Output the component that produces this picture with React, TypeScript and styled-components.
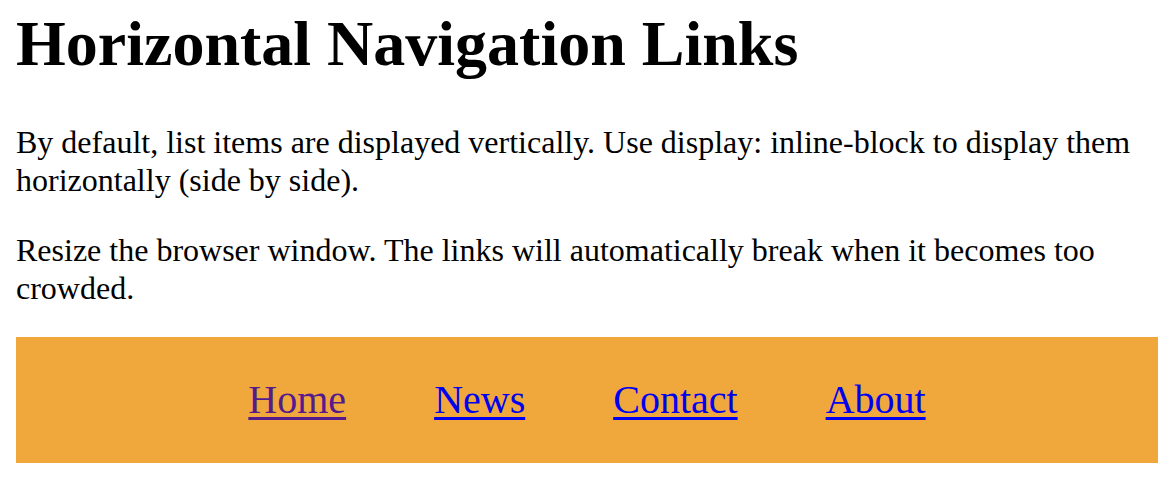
import React from "react";
import styled, { createGlobalStyle } from "styled-components";

const Global = createGlobalStyle`
  html, body { margin: 0; padding: 0; background: #fff; }
  body { font-family: "Liberation Serif", "Times New Roman", serif; color: #000; }
`;

const Page = styled.div`
  padding: 7px 8px 0 16px;
`;

const Title = styled.h1`
  font-size: 64px;
  line-height: 74px;
  font-weight: bold;
  margin: 0 0 42px 0;
`;

const Para = styled.p<{ $last?: boolean }>`
  font-size: 32px;
  line-height: 38px;
  margin: 0 0 ${(p) => (p.$last ? "30px" : "32px")} 0;
`;

const Nav = styled.ul`
  list-style-type: none;
  margin: 0;
  padding: 0;
  background-color: #f0a83c;
  text-align: center;
  font-size: 32px;
`;

const Item = styled.li`
  display: inline-block;
  font-size: 40px;
  line-height: 46px;
  padding: 40px;
`;

const Link = styled.a<{ $visited?: boolean }>`
  color: ${(p) => (p.$visited ? "#551a8b" : "#0000ee")};
  text-decoration: underline;
  text-decoration-thickness: 3px;
  text-underline-offset: 4px;
`;

export default function App() {
  const links = [
    { label: "Home", visited: true },
    { label: "News", visited: false },
    { label: "Contact", visited: false },
    { label: "About", visited: false },
  ];
  return (
    <>
      <Global />
      <Page>
        <Title>Horizontal Navigation Links</Title>
        <Para>
          By default, list items are displayed vertically. Use display: inline-block to display them
          horizontally (side by side).
        </Para>
        <Para $last>
          Resize the browser window. The links will automatically break when it becomes too crowded.
        </Para>
        <Nav>
          {links.map((l, i) => (
            <React.Fragment key={l.label}>
              <Item>
                <Link href="#" $visited={l.visited}>
                  {l.label}
                </Link>
              </Item>
              {i < links.length - 1 ? " " : null}
            </React.Fragment>
          ))}
        </Nav>
      </Page>
    </>
  );
}
